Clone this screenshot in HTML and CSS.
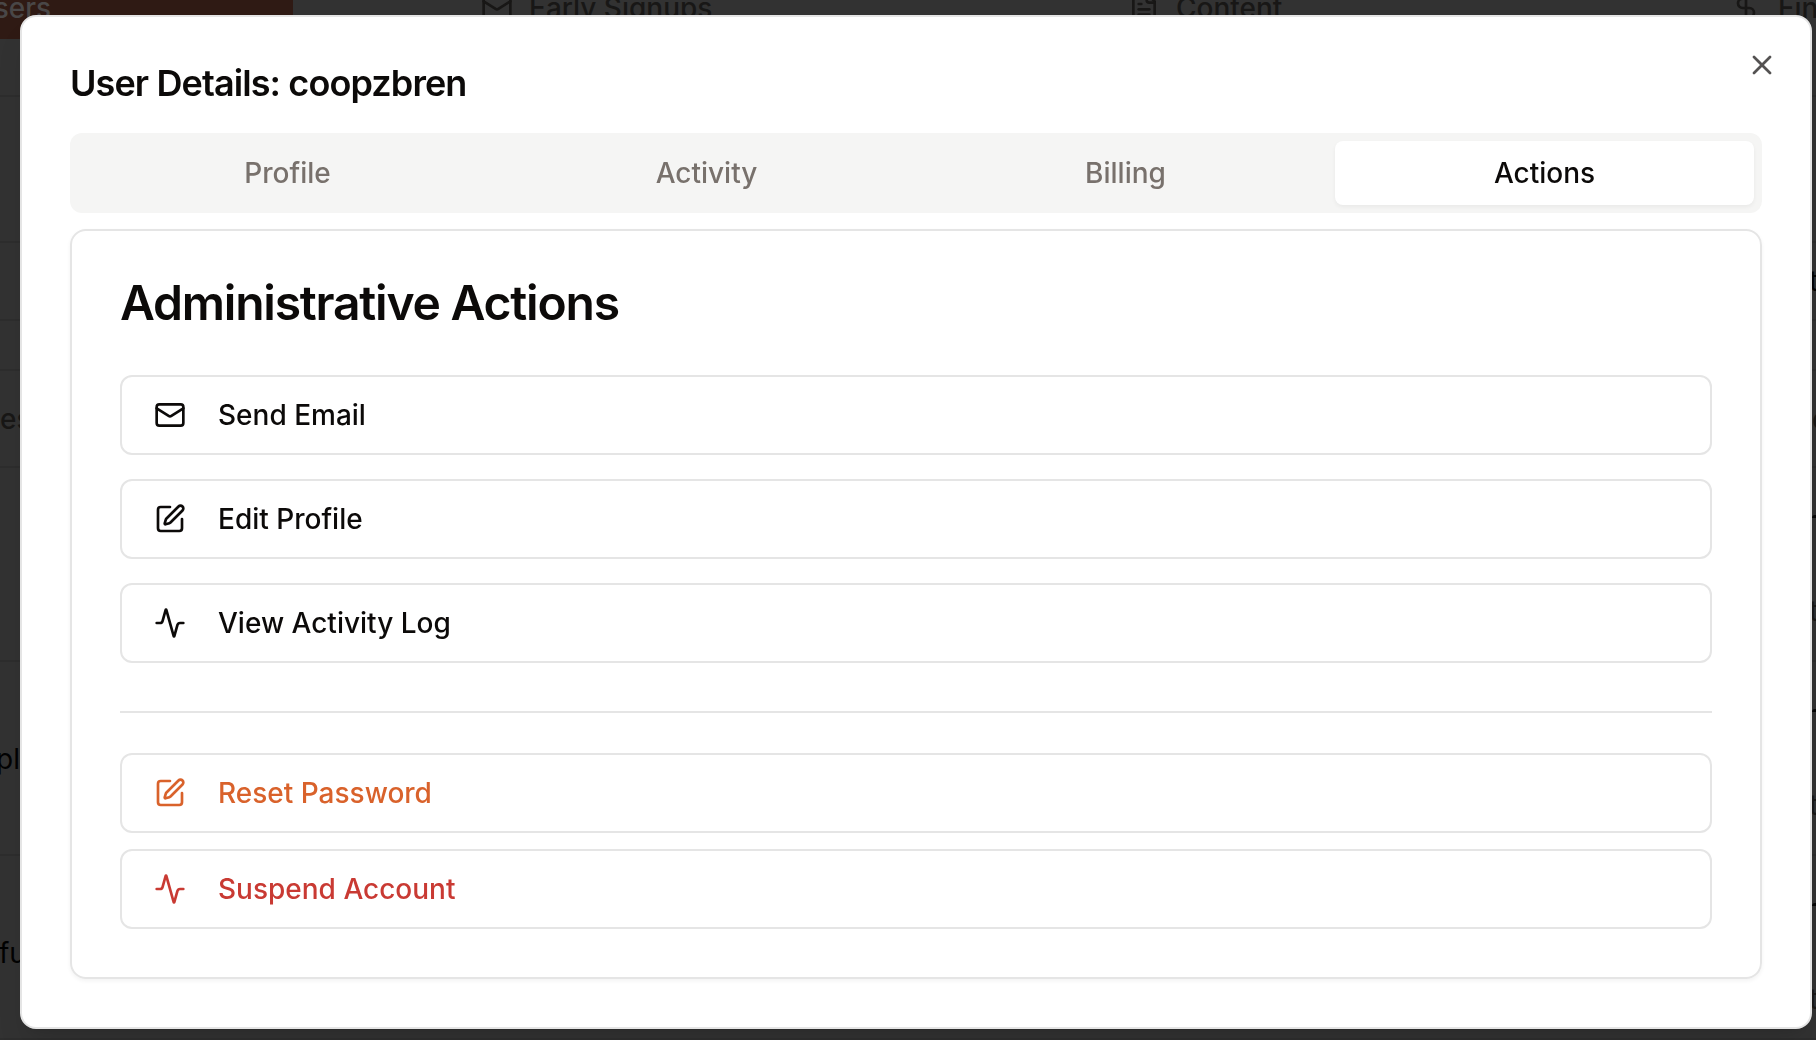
FILE: index.html
```html
<!DOCTYPE html>
<html lang="en">
<head>
<meta charset="utf-8">
<title>User Details</title>
<link rel="stylesheet" href="styles.css">
</head>
<body>
<svg class="sprite" aria-hidden="true">
  <symbol id="mail" viewBox="0 0 24 24"><rect width="20" height="16" x="2" y="4" rx="2"/><path d="m22 7-8.97 5.7a1.94 1.94 0 0 1-2.06 0L2 7"/></symbol>
  <symbol id="edit" viewBox="0 0 24 24"><path d="M12 3H5a2 2 0 0 0-2 2v14a2 2 0 0 0 2 2h14a2 2 0 0 0 2-2v-7"/><path d="M18.375 2.625a1 1 0 0 1 3 3l-9.013 9.014a2 2 0 0 1-.853.505l-2.873.84a.5.5 0 0 1-.62-.62l.84-2.873a2 2 0 0 1 .506-.852z"/></symbol>
  <symbol id="activity" viewBox="0 0 24 24"><path d="M22 12h-2.48a2 2 0 0 0-1.93 1.46l-2.35 8.36a.25.25 0 0 1-.48 0L9.24 2.18a.25.25 0 0 0-.48 0l-2.35 8.36A2 2 0 0 1 4.49 12H2"/></symbol>
  <symbol id="file" viewBox="0 0 24 24"><path d="M15 2H6a2 2 0 0 0-2 2v16a2 2 0 0 0 2 2h12a2 2 0 0 0 2-2V7Z"/><path d="M14 2v4a2 2 0 0 0 2 2h4"/><path d="M10 9H8"/><path d="M16 13H8"/><path d="M16 17H8"/></symbol>
  <symbol id="dollar" viewBox="0 0 24 24"><path d="M12 2v20"/><path d="M17 5H9.5a3.5 3.5 0 0 0 0 7h5a3.5 3.5 0 0 1 0 7H6"/></symbol>
  <symbol id="close" viewBox="0 0 24 24"><path d="M18 6 6 18"/><path d="m6 6 12 12"/></symbol>
</svg>

<div class="page" aria-hidden="true">
  <nav class="nav">
    <span class="nav-item nav-current">Users</span>
    <span class="nav-item nav-signups"><svg class="icon"><use href="#mail"/></svg>Early Signups</span>
    <span class="nav-item nav-content"><svg class="icon"><use href="#file"/></svg>Content</span>
    <span class="nav-item nav-finance"><svg class="icon"><use href="#dollar"/></svg>Finance</span>
  </nav>
  <div class="line line-a"></div>
  <div class="line line-b"></div>
  <div class="line line-c"><span></span><span class="edge-text stem dark">t</span></div>
  <div class="line line-d"></div>
  <div class="line line-e"><span class="edge-text heading">es</span><span class="edge-text heading">e</span></div>
  <div class="line line-f"><span></span><span class="edge-cell"><i class="mark"></i><span class="edge-text stem">t</span></span></div>
  <div class="line line-f"><span class="edge-text name name-first dark">pl</span><span class="edge-cell"><i class="mark"></i><span class="edge-text stem">t</span></span></div>
  <div class="line line-g"><span class="edge-text name name-second dark">fu</span><span class="edge-cell"><i class="mark"></i><span class="edge-text stem">t</span></span></div>
</div>

<div class="overlay">
  <section class="dialog" role="dialog" aria-labelledby="title">
    <h2 class="dialog-title" id="title">User Details: coopzbren</h2>
    <div class="tabs">
      <button class="tab">Profile</button>
      <button class="tab">Activity</button>
      <button class="tab">Billing</button>
      <button class="tab tab-active">Actions</button>
    </div>
    <div class="card">
      <h3 class="card-title">Administrative Actions</h3>
      <div class="actions">
        <button class="action"><svg class="icon"><use href="#mail"/></svg>Send Email</button>
        <button class="action"><svg class="icon"><use href="#edit"/></svg>Edit Profile</button>
        <button class="action"><svg class="icon"><use href="#activity"/></svg>View Activity Log</button>
      </div>
      <div class="danger-zone">
        <button class="action action-warn"><svg class="icon"><use href="#edit"/></svg>Reset Password</button>
        <button class="action action-danger"><svg class="icon"><use href="#activity"/></svg>Suspend Account</button>
      </div>
    </div>
    <button class="close" aria-label="Close"><svg class="icon"><use href="#close"/></svg></button>
  </section>
</div>
</body>
</html>
```
FILE: styles.css
```css
* { box-sizing: border-box; }

body {
  margin: 0;
  height: 1040px;
  overflow: hidden;
  background: #323232;
  color: #0c0a09;
  font-family: Inter, sans-serif;
  font-size: 28px;
  line-height: 40px;
}

button {
  margin: 0;
  border: 0;
  background: none;
  color: inherit;
  font: inherit;
}

.sprite { display: none; }

.icon {
  width: 32px;
  height: 32px;
  flex: none;
  fill: none;
  stroke: currentColor;
  stroke-width: 2;
  stroke-linecap: round;
  stroke-linejoin: round;
}

/* Dimmed page behind the dialog */
.page {
  height: 1040px;
  overflow: hidden;
  color: #181716;
}

.nav {
  display: grid;
  grid-template-columns: 293px 648px 610px 265px;
  height: 39px;
  font-weight: 500;
}

.nav-item {
  display: flex;
  align-items: center;
  gap: 16px;
  height: 39px;
  padding-bottom: 24px;
  white-space: nowrap;
}

.nav-current {
  background: #2f1a14;
  color: #494747;
  text-indent: -27px;
}

.nav-signups { padding-left: 188px; }
.nav-content { padding-left: 187px; }
.nav-finance { padding-left: 179px; }

.line {
  display: flex;
  justify-content: space-between;
  align-items: center;
  border-bottom: 2px solid #2d2d2d;
}

.line-a { height: 58px; }
.line-b { height: 146px; }
.line-c { height: 78px; }
.line-d { height: 50px; }
.line-e { height: 97px; }
.line-f { height: 194px; }
.line-g { height: 184px; }

.line-f,
.line-g { align-items: flex-start; }

.edge-text {
  width: 20px;
  overflow: hidden;
}

.edge-text:last-child { width: 4px; }
.heading { font-weight: 500; }
.stem { text-indent: -3px; }
.dark { color: #020202; }
.name { margin-top: 77px; }
.name-first { text-indent: -4px; }
.name-second { text-indent: -1px; }

.edge-cell {
  display: flex;
  flex-direction: column;
  gap: 73px;
  width: 4px;
  padding-top: 47px;
}

.mark {
  height: 3px;
  border-top-left-radius: 3px;
  background: #060606;
}

.overlay {
  position: fixed;
  inset: 0;
  padding: 15px 4px 11px 20px;
}

.dialog {
  position: relative;
  display: flex;
  flex-direction: column;
  height: 1014px;
  padding: 48px;
  border: 2px solid #e5e5e5;
  border-radius: 16px;
  background: #fff;
  box-shadow: 0 20px 30px -6px rgb(0 0 0 / 0.1), 0 8px 12px -8px rgb(0 0 0 / 0.1);
}

.dialog-title {
  margin: 0 0 32px;
  font-size: 36px;
  font-weight: 600;
  line-height: 36px;
  letter-spacing: -0.9px;
}

.tabs {
  display: grid;
  grid-template-columns: repeat(4, 1fr);
  height: 80px;
  padding: 8px;
  border-radius: 12px;
  background: #f5f5f4;
  color: #78716c;
}

.tab {
  padding: 0;
  border-radius: 8px;
  font-weight: 500;
}

.tab-active {
  background: #fff;
  color: #0c0a09;
  box-shadow: 0 2px 4px rgb(0 0 0 / 0.05);
}

.card {
  margin-top: 16px;
  padding: 48px;
  border: 2px solid #e5e5e5;
  border-radius: 16px;
  box-shadow: 0 2px 4px rgb(0 0 0 / 0.05);
}

.card-title {
  margin: 0 0 48px;
  font-size: 48px;
  font-weight: 600;
  line-height: 48px;
  letter-spacing: -1.2px;
}

.actions {
  display: flex;
  flex-direction: column;
  gap: 24px;
}

.danger-zone {
  display: flex;
  flex-direction: column;
  gap: 16px;
  margin-top: 48px;
  padding-top: 40px;
  border-top: 2px solid #e5e5e5;
}

.action {
  display: flex;
  align-items: center;
  gap: 32px;
  height: 80px;
  padding: 0 32px;
  border: 2px solid #e5e5e5;
  border-radius: 12px;
  font-weight: 500;
  text-align: left;
}

.action-warn { color: #d9622b; }
.action-danger { color: #c93a33; }

.close {
  position: absolute;
  top: 32px;
  right: 32px;
  display: flex;
  padding: 0;
  opacity: 0.7;
}
```
